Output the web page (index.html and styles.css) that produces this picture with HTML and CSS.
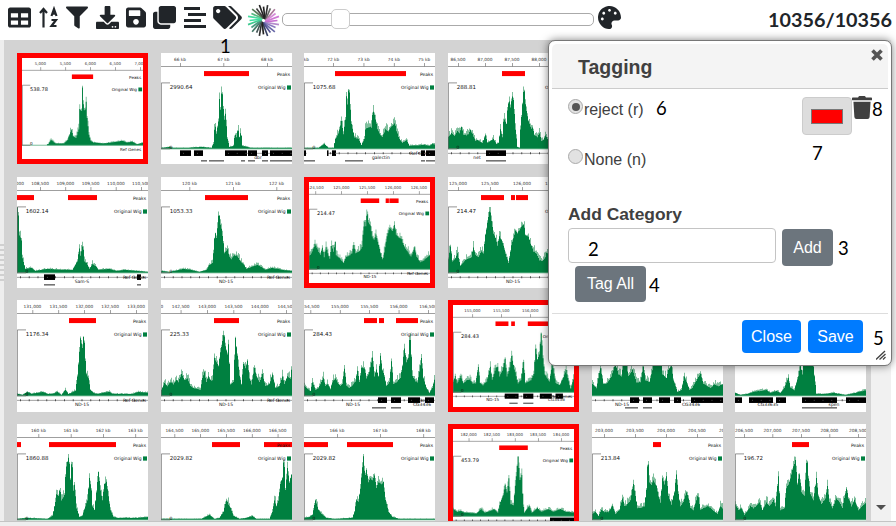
FILE: index.html
```html
<!DOCTYPE html>
<html lang="en">
<head>
<meta charset="utf-8">
<title>Tagging</title>
<link rel="stylesheet" href="styles.css">
</head>
<body>
<header class="toolbar">
  <svg class="icon w23" viewBox="0 0 512 512"><path d="M464 32H48C21.49 32 0 53.49 0 80v352c0 26.51 21.49 48 48 48h416c26.51 0 48-21.49 48-48V80c0-26.51-21.49-48-48-48zM224 416H64v-96h160v96zm0-160H64v-96h160v96zm224 160H288v-96h160v96zm0-160H288v-96h160v96z"/></svg>
  <svg class="icon w20" viewBox="0 0 20 22"><path d="M4.500 21V3M1 6.500l3.500-4 3.500 4M12.500 9.500l2.500-7 2.500 7M13.300 7.200h3.400M12.500 13.500h4.500l-4.500 6h5" fill="none" stroke="#212529" stroke-width="2.200"/></svg>
  <svg class="icon w22" viewBox="0 0 512 512"><path d="M487.976 0H24.028C2.710 0-8.047 25.866 7.058 40.971L192 225.941V432c0 7.831 3.821 15.170 10.237 19.662l80 55.980C298.020 518.690 320 507.493 320 487.980V225.941l184.947-184.970C520.021 25.896 509.338 0 487.976 0z"/></svg>
  <svg class="icon w23" viewBox="0 0 512 512"><path d="M216 0h80c13.300 0 24 10.700 24 24v168h87.700c17.800 0 26.700 21.500 14.100 34.100L269.700 378.300c-7.500 7.500-19.800 7.500-27.300 0L90.100 226.100c-12.600-12.600-3.700-34.100 14.100-34.100H192V24c0-13.300 10.700-24 24-24zm296 376v112c0 13.300-10.700 24-24 24H24c-13.300 0-24-10.700-24-24V376c0-13.300 10.700-24 24-24h146.700l49 49c20.100 20.100 52.500 20.100 72.600 0l49-49H488c13.300 0 24 10.700 24 24zm-124 88c0-11-9-20-20-20s-20 9-20 20 9 20 20 20 20-9 20-20zm64 0c0-11-9-20-20-20s-20 9-20 20 9 20 20 20 20-9 20-20z"/></svg>
  <svg class="icon w20" viewBox="0 0 448 512"><path d="M433.941 129.941l-83.882-83.882A48 48 0 0 0 316.118 32H48C21.490 32 0 53.490 0 80v352c0 26.510 21.490 48 48 48h352c26.510 0 48-21.490 48-48V163.882a48 48 0 0 0-14.059-33.941zM224 416c-35.346 0-64-28.654-64-64 0-35.346 28.654-64 64-64s64 28.654 64 64c0 35.346-28.654 64-64 64zm96-304.520V212c0 6.627-5.373 12-12 12H76c-6.627 0-12-5.373-12-12V108c0-6.627 5.373-12 12-12h228.520c3.183 0 6.235 1.264 8.485 3.515l3.480 3.480A11.996 11.996 0 0 1 320 111.480z"/></svg>
  <svg class="icon w23" viewBox="0 0 512 512"><path d="M464 0c26.510 0 48 21.490 48 48v288c0 26.510-21.490 48-48 48H176c-26.510 0-48-21.490-48-48V48c0-26.510 21.490-48 48-48h288M176 416c-44.112 0-80-35.888-80-80V128H48c-26.510 0-48 21.490-48 48v288c0 26.510 21.490 48 48 48h288c26.510 0 48-21.490 48-48v-48H176z"/></svg>
  <svg class="icon w23" viewBox="0 0 23 23"><path d="M1 1h16v3H1zM5 7h18v3H5zM1 13h17v3H1zM1 19h22v3H1z"/></svg>
  <svg class="icon w29" viewBox="0 0 640 512"><path d="M497.941 225.941L286.059 14.059A48 48 0 0 0 252.118 0H48C21.490 0 0 21.490 0 48v204.118a48 48 0 0 0 14.059 33.941l211.882 211.882c18.744 18.745 49.136 18.746 67.882 0l204.118-204.118c18.745-18.745 18.745-49.137 0-67.882zM112 160c-26.510 0-48-21.490-48-48s21.490-48 48-48 48 21.490 48 48-21.490 48-48 48zm513.941 133.823L421.823 497.941c-18.745 18.745-49.137 18.745-67.882 0l-.36-.36L527.640 323.522c16.999-16.999 26.360-39.600 26.360-63.640s-9.362-46.641-26.360-63.640L331.397 0h48.721a48 48 0 0 1 33.941 14.059l211.882 211.882c18.745 18.745 18.745 49.137 0 67.882z"/></svg>
  <svg class="burst" id="burst" viewBox="-16 -16 32 32"></svg>
  <div class="slider"><span class="handle"></span></div>
  <svg class="icon w23 palette" viewBox="0 0 512 512"><path d="M204.300 5C104.900 24.400 24.800 104.300 5.200 203.400c-37 187 131.700 326.400 258.800 306.700 41.200-6.400 61.400-54.600 42.500-91.700-23.100-45.400 9.900-98.400 60.900-98.400h79.700c35.800 0 64.800-29.600 64.900-65.300C511.500 97.100 368.100-26.900 204.300 5zM96 320c-17.700 0-32-14.300-32-32s14.300-32 32-32 32 14.300 32 32-14.300 32-32 32zm32-128c-17.700 0-32-14.300-32-32s14.300-32 32-32 32 14.300 32 32-14.300 32-32 32zm128-64c-17.700 0-32-14.300-32-32s14.300-32 32-32 32 14.300 32 32-14.300 32-32 32zm128 64c-17.700 0-32-14.300-32-32s14.300-32 32-32 32 14.300 32 32-14.300 32-32 32z"/></svg>
  <div class="count">10356/10356</div>
</header>
<main class="content">
  <div class="splitter"><i></i><i></i><i></i><i></i><i></i><i></i><i></i><i></i></div>
  <section class="gallery" id="gallery"></section>
  <div class="scrollbar"><span class="down"></span></div>
</main>
<footer class="bottom"></footer>

<div class="dialog">
  <div class="dialog-head"><h1>Tagging</h1>
    <svg class="close-x" viewBox="0 0 12 12"><path d="M1.500 1.500l9 9M10.500 1.500l-9 9" stroke="#555" stroke-width="3.600"/></svg>
  </div>
  <div class="dialog-body">
    <div class="choice first">
      <span class="radio on"></span><span class="choice-name">reject (r)</span>
      <span class="swatch"><span></span></span>
      <svg class="trash" viewBox="0 0 448 512"><path d="M432 32H312l-9.400-18.700A24 24 0 0 0 281.100 0H166.800a23.720 23.720 0 0 0-21.400 13.300L136 32H16A16 16 0 0 0 0 48v32a16 16 0 0 0 16 16h416a16 16 0 0 0 16-16V48a16 16 0 0 0-16-16zM53.200 467a48 48 0 0 0 47.900 45h245.800a48 48 0 0 0 47.900-45L416 128H32z"/></svg>
    </div>
    <div class="choice"><span class="radio"></span><span class="choice-name">None (n)</span></div>
    <h2>Add Category</h2>
    <div class="add-row"><div class="field"></div><div class="btn grey add">Add</div></div>
    <div class="btn grey tagall">Tag All</div>
  </div>
  <div class="dialog-foot"><div class="btn blue close">Close</div><div class="btn blue save">Save</div></div>
  <svg class="grip" viewBox="0 0 10 10"><path d="M0 9.500L9 1M3.500 9.500L9.500 4M7 9.500L9.500 7" stroke="#444" stroke-width="1.300"/></svg>
</div>

<span class="note n1">1</span><span class="note n2">2</span><span class="note n3">3</span><span class="note n4">4</span>
<span class="note n5">5</span><span class="note n6">6</span><span class="note n7">7</span><span class="note n8">8</span>
<script src="tracks.js"></script>
</body>
</html>
```
FILE: styles.css
```css
* { box-sizing: border-box; }
body { margin: 0; width: 896px; height: 526px; overflow: hidden; position: relative; background: #fff; font-family: "Liberation Sans", Arial, sans-serif; display: flex; flex-direction: column; }

.toolbar { height: 40px; flex: none; display: flex; padding: 6px 4px 0 8px; align-items: flex-start; }
.icon { height: 23px; flex: none; fill: #212529; margin-right: 8px; }
.w20 { width: 20px; } .w22 { width: 22px; } .w23 { width: 23px; } .w29 { width: 29px; }
.toolbar .w20 { margin-right: 7px; }
.toolbar .w23 { margin-right: 7px; }
.toolbar .w23:first-child { margin-right: 8px; }
.toolbar .w29 { margin-right: 5px; }
.burst { width: 33px; height: 33px; margin: -2px 2px 0 0; flex: none; }
.slider { width: 312px; height: 13px; margin-top: 7px; border: 1px solid #aaa; border-radius: 5px; flex: none; position: relative; }
.handle { position: absolute; left: 48px; top: -5px; width: 19px; height: 20px; border: 1px solid #ccc; border-radius: 5px; background: #fff; }
.palette { margin-left: 4px; }
.count { margin-left: auto; font: bold 19.800px/26px Lato, sans-serif; color: #212529; }

.content { flex: 1; min-height: 0; display: flex; }
.splitter { width: 4px; background: #eee; display: flex; flex-direction: column; gap: 3px; padding-top: 204px; }
.splitter i { height: 2px; background: #d0d0d0; flex: none; }
.gallery { width: 867px; height: 481px; overflow: hidden; background: #d3d3d3; padding: 13px; display: grid; grid-template-columns: repeat(6, 131px); grid-auto-rows: 111.400px; column-gap: 12.700px; row-gap: 12.200px; }
.tile { width: 131px; height: 111.400px; background: #fff; overflow: hidden; }
.tile.rejected { border: 5px solid #f00; }
.tile svg { display: block; width: 100%; height: 100%; }
.tile text { font-family: "DejaVu Sans", sans-serif; font-size: 4.500px; fill: #111; }
.tile .value { font-size: 5.500px; fill: #111; }
.tile .tick { font-size: 4.300px; fill: #333; }
.scrollbar { width: 20px; background: #f1f1f1; display: flex; align-items: flex-end; justify-content: center; padding-bottom: 11px; }
.down { border: 5px solid transparent; border-top-color: #505050; border-bottom: 0; }
.bottom { height: 5px; flex: none; background: #eee; border-top: 1px solid #c4c4c4; }

.dialog { position: absolute; left: 548px; top: 40px; width: 344px; height: 326px; background: #fff; border: 1px solid #777; border-radius: 7px; padding: 3px; box-shadow: 0 0 8px rgba(0,0,0,.5); color: #404040; display: flex; flex-direction: column; }
.dialog-head { height: 45px; flex: none; background: #f4f4f4; border-bottom: 1px solid #ccc; border-radius: 5px 5px 0 0; display: flex; justify-content: space-between; padding: 0 5px 0 26px; }
.dialog-head h1 { margin: 11px 0 0; font-size: 19.500px; line-height: 24px; }
.close-x { width: 12px; height: 12px; margin-top: 5px; }
.dialog-body { flex: 1; padding-left: 16px; }
.choice { display: flex; height: 50px; padding-top: 10px; }
.radio { width: 15px; height: 15px; border: 1px solid #aaa; border-radius: 50%; background: #e2e2e2; display: flex; align-items: center; justify-content: center; flex: none; }
.radio.on::after { content: ""; width: 8px; height: 8px; border-radius: 50%; background: #555; }
.choice-name { margin: 2px 0 0 1px; font-size: 16px; line-height: 18px; width: 218px; }
.swatch { width: 50px; height: 38px; margin-top: -2px; background: #ddd; border: 1px solid #ccc; border-radius: 4px; display: flex; align-items: center; justify-content: center; }
.swatch span { width: 32px; height: 15px; background: #f00; border: 1px solid #777; }
.trash { width: 20px; height: 23px; margin-top: -3px; fill: #404040; }
.dialog-body h2 { margin: 15px 0 0; font-size: 17.400px; line-height: 20px; }
.add-row { display: flex; align-items: flex-start; gap: 6px; margin-top: 4px; height: 38px; }
.field { width: 208px; height: 35px; border: 1px solid #c4c4c4; border-radius: 4px; }
.btn { color: #fff; font-size: 16px; border-radius: 4px; display: flex; align-items: center; justify-content: center; }
.grey { background: #6c757d; }
.blue { background: #007bff; }
.add { width: 51px; height: 37px; margin-top: 1px; }
.tagall { width: 71px; height: 36px; margin-left: 7px; }
.dialog-foot { height: 49px; flex: none; border-top: 1px solid #ddd; padding: 6px 25px 0 0; display: flex; justify-content: flex-end; gap: 7px; }
.close { width: 59px; height: 33px; } .save { width: 55px; height: 33px; }
.grip { position: absolute; right: 5px; bottom: 5px; width: 10px; height: 10px; }

.note { position: absolute; font: 18.500px/20px Lato, sans-serif; color: #000; }
.n1 { left: 220px; top: 36px; } .n2 { left: 588px; top: 239px; } .n3 { left: 838px; top: 238px; } .n4 { left: 649px; top: 275px; }
.n5 { left: 873px; top: 328px; } .n6 { left: 656px; top: 98px; } .n7 { left: 812px; top: 143px; } .n8 { left: 872px; top: 99px; }
```
FILE: tracks.js
```js
// Each tile: v value, t tick start/step positions, l tick labels, p peaks,
// w signal outline as x,height pairs, g gene boxes, n gene names, u lower marks.
const LINE = [0, 131];
const tiles = [
 {r:1,v:'538.78',t:[20,27],l:['5,000','5,500','6,000','6,500','7,000'],p:[[54,23]],w:'27,0 31,6 36,2 45,2 49,6 53,17 55,10 58,8 61,18 62,40 64,38 65,64 66,45 67.5,35 69,48 70,30 72,12 74,5 77,3 88,2 103,4 108,5 113,3 119,4 124,1 131,3',ref:1},
 {v:'2990.64',t:[19,43.5],l:['66 kb','67 kb','68 kb'],p:[[43,45]],w:'0,1 8,2 12,1 25,1 40,2 50,1 52,5 53.5,27 55,15 57,28 58,50 59,40 60.5,64 61.5,45 63,30 64,35 66,10 68,2 72,3 73.5,15 75,12 76.5,21 78,12 79.5,18 81,3 90,1 131,1',line:[64,131],g:[[19,11],[33,9],[64,22],[87,9],[101,6],[109,22]],n:[['dbr',97]],u:[[40,6],[48,15],[80,4],[87,7],[101,6],[109,22]]},
 {v:'1075.68',t:[-1,30.3],l:['71 kb','72 kb','73 kb','74 kb','75 kb'],p:[[31,71]],w:'0,1 14,1 20,5 24,1 29,1 31,10 34,16 37,28 39,15 41,30 42,53 43,45 44.5,65 46,40 47,25 50,12 54,10 57,4 60,10 61,20 64,22 67,22 68.5,40 71,30 73,20 76,14 78,12 81,20 84,18 86,22 89,24 90.5,26 92,18 95,10 98,6 102,9 105,3 120,4 125,3 128,5 131,4',line:[23,131],ref:1,g:[[0,2],[23,1.5],[28,4],[117,4],[122,9]],n:[['galectin',77]],u:[[0,11],[41,18],[117,4],[122,9]]},
 {v:'288.81',t:[10,27],l:['86,500','87,000','87,500','88,000','88,500'],p:[[54,23]],w:'0,12 3,16 6,13 9,18 11,16 13,22 15,15 18,14 20,15 22,19 24,15 27,8 29,9 32,7 34,6 37,14 39,6 42,8 45,10 48,5 50,6 52,20 54,12 55,28 56,30 58,25 59.5,45 61,48 62,42 64.5,56 66,35 67,20 69,2 71,1 72,20 73,32 75.5,64 77,45 78,38 80,28 83,20 84,22 86,14 89,12 91,16 93,8 95,9 97,14 99,10 101,15 131,8',line:LINE,g:[[38,20]],n:[['net',29]],u:[[38,20]]},
 {}, {},
 {v:'1602.14',t:[-2,25.2],l:['108,000','108,500','109,000','109,500','110,000','110,500'],p:[[0,17],[51,29]],w:'0,65 1,58 2,38 4,33 5,15 8,4 14,5 18,2 30,4 45,3 55,3 58,8 60,12 62,25 63,18 65.5,29 67,12 69,10 72,4 75,9 78,7 81,3 92,4 99,2 107,3 120,2 131,1',line:LINE,ref:1,g:[[27,11],[120,4]],n:[['Sam-S',65]],u:[[27,11],[120,4]]},
 {v:'1053.33',t:[28.5,43.5],l:['120 kb','121 kb','122 kb'],p:[[44,43]],w:'0,2 8,1 22,4 30,3 38,1 45,3 48,8 51,10 52,20 53.5,42 55,35 56.5,50 57.5,64 58.5,50 60,45 62,30 63,20 66,24 68,16 70,14 73,18 76,17 79,12 82,9 85,4 90,6 96,8 100,6 104,3 110,5 116,4 121,3 131,2',line:LINE,ref:1,n:[['ND-15',65]]},
 {r:1,v:'214.47',t:[7,28],l:['124,500','125,000','125,500','126,000','126,500'],p:[[56,20],[83,3.5],[87,10]],w:'0,15 3,20 6,28 9,22 12,16 14,24 16,14 18,25 20,18 22,12 24,26 26,20 28,30 29,16 33,12 37,7 40,14 44,16 46,18 48,27 50,18 54,20 57,25 58.5,45 60,52 61,48 62.5,65 64,52 66,48 68,36 70,33 72,38 75,27 78,14 79.5,10 82,25 84,37 87,46 90,42 92,49 94,38 97,35 100,33 103,24 107,19 110,14 114,24 116,14 120,8 124,10 128,14 131,16',line:LINE,ref:1,n:[['ND-15',66]]},
 {v:'214.47',t:[10,32],l:['125,000','125,500','126,000','126,500'],p:[[33,23],[63,4],[68,12]],w:'0,14 2,27 4,12 7,15 9,20 12,7 16,12 20,15 23,16 25,26 27,18 30,16 33,22 35,20 37,38 39,50 41.5,65 43,52 45,40 47,35 49,28 51,37 53,33 55,28 57,20 60,10 63,28 65,35 67,42 69,40 71,43 73,46 75.5,49 77,38 80,36 82,30 85,22 88,20 91,13 94,12 97,16 98.5,22 101,12 131,15',line:LINE,n:[['ND-15',65]]},
 {}, {},
 {v:'1176.34',t:[15.5,25.9],l:['131,000','131,500','132,000','132,500','133,000'],p:[[52,27]],w:'0,2 5,1 10,4 14,2 25,4 30,2 35,2 40,4 44,1 48,6 51,2 58,5 60,20 61.5,38 63,58 65,48 66.5,65 67.5,42 69,22 71,18 73,6 76,3 79,2 92,4 95,2 103,2 115,2 121,4 131,3',line:LINE,ref:1,n:[['ND-15',65]]},
 {v:'225.33',t:[-6.7,26.4],l:['142,000','142,500','143,000','143,500','144,000','144,500'],p:[[53,25]],w:'0,6 3,13 6,10 9,14 12,12 15,16 17,14 20,22 23,16 26,18 29,10 32,8 36,7 39,6 41,18 43,24 45,14 47,20 49,16 51,16 53,38 55,34 57,30 59,44 61,55 62.5,64 64,50 66,42 67,52 69,12 72,14 74,58 76,40 78,20 80,12 82,32 84,28 86,35 88,18 90,12 93,28 95,20 98,14 101,22 104,10 108,12 111,22 114,8 118,10 121,20 123,12 126,20 129,18 131,34',line:LINE,ref:1,n:[['ND-15',65]]},
 {v:'284.43',t:[6.5,29.4],l:['154,500','155,000','155,500','156,000','156,500'],p:[[60,13],[75,5],[92,22]],w:'0,10 3,7 6,5 8,14 11,6 14,8 19,18 21,10 23,12 26,7 28,14 31,18 34,12 36,10 38,12 40,28 42,10 45,8 49,12 51,15 53,26 55,14 57,28 60,28 62,18 65,24 68,39 70,20 72,27 74,20 76,40 78,26 80,20 82,10 85,14 87,35 89,12 92,14 96,18 98,30 100,48 102,34 104,38 105.5,65 107,40 108,20 111,15 113,14 115,25 117,38 119,18 122,8 125,3 128,8 131,20',line:LINE,ref:1,g:[[74,9],[87,10],[104,12],[121,9]],n:[['ND-15',49],['CG3436',118]],u:[[68,14],[87,10]]},
 {r:1,v:'284.43',t:[21,31.3],l:['155,000','155,500','156,000','156,500'],p:[[46,14],[63,4],[81,25]],w:'0,12 2,18 4,10 8,18 11,10 15,14 18,14 21,10 24,10 27,28 29,10 32,8 36,12 40,28 42,14 46,27 48,28 50,18 53,24 56,37 58,18 61,27 63,40 65,30 67,22 70,10 73,14 76,34 78,10 84,14 87,20 89,48 91,36 93,42 95,65 97,38 99,20 104,12 107,32 111,10 115,8 118,14 122,25 125,12 127,4 131,18',line:LINE,ref:1,g:[[56,15],[76,11],[94,13],[111,8]],n:[['ND-15',43],['CG3436',112]],u:[[61,9],[76,11]]},
 {w:'0,12 4,8 8,28 11,12 15,13 19,20 23,32 26,22 29,20 31,32 33,36 36,20 40,26 44,14 48,14 51,30 53,16 57,14 60,26 63,50 65,60 68,50 70,22 74,18 76,26 79,30 81,16 85,4 89,6 92,20 94,14 97,6 100,8 103,14 108,22 111,12 115,10 118,8 122,12 126,10 131,12',line:LINE,g:[[38,9],[51,9],[67,11],[82,7],[99,32]],n:[['ND-15',30],['CG3436',99]],u:[[33,13],[51,9]]},
 {w:'0,3 5,1 12,2 18,4 25,5 31,6 35,3 41,5 45,3 49,8 51,14 53,18 55,8 59,6 63,20 65,30 67,22 69,50 72,65 74,60 77,40 79,20 81,2 90,2 98,3 110,1 120,3 131,6',line:[95,131],g:[[0,7],[14,24],[41,10],[67,35],[111,20]],n:[['CG33635',33],['spen',99]],u:[[67,35]]},
 {v:'1860.88',t:[21.5,32.3],l:['160 kb','161 kb','162 kb','163 kb'],p:[[0,4],[32,67]],w:'0,1 10,2 30,1 35,4 38,18 39,26 41,24 42.5,32 44,20 47,25 48.5,52 50,58 51.5,64 53,40 54.5,64 56,30 57,35 59,12 62,3 65,4 68,14 70,20 72,42 74,30 75,14 77,10 79,28 81,48 83,30 85,20 87,36 89,38 91,24 93,10 96,3 100,2 120,2 131,3',g:[[0,15],[22,97]]},
 {v:'2029.82',t:[13.5,25.8],l:['164,500','165,000','165,500','166,000','166,500'],p:[[51,28],[103,28]],w:'0,1 40,1 48,5 53,1 58,2 62,8 65,20 67,16 69,12 72,4 78,1 85,2 91,4 95,1 108,1 111,8 113,20 115,14 117,20 119,36 121,42 122.5,65 124,30 126,52 128,38 130,45 131,44'},
 {v:'2029.82',t:[33,43.2],l:['166 kb','167 kb','168 kb'],p:[[0,24],[43,46]],w:'0,2 5,3 8,5 11,20 14,10 17,6 22,2 30,1 48,2 50,8 52,20 54,18 56,32 59,64 60.5,42 62,50 64,38 66,42 68,40 70,45 72,32 74,38 77,36 79,38 81,20 84,8 88,3 95,1 131,1'},
 {r:1,v:'453.79',t:[17,25],l:['182,000','182,500','183,000','183,500','184,000'],p:[[50,31]],w:'0,8 4,5 8,6 12,4 25,3 30,8 34,4 40,6 44,8 48,4 51,16 54,24 56,35 58,26 60,42 62,14 65,12 67,34 70,66 72,40 74,46 75.5,14 77,4 82,12 85,4 91,9 95,5 103,8 108,5 116,8 122,5 131,4',line:LINE,g:[[105,26]]},
 {v:'213.84',t:[12,31],l:['203,000','203,500','204,000','204,500','205,000'],p:[[61,8]],w:'0,6 3,8 6,4 9,10 12,8 16,8 20,14 23,6 27,10 30,22 32,14 35,16 38,20 41,36 43,24 45,12 48,12 52,14 54,30 55.5,65 57,38 59,35 61,40 64,34 66,24 68,18 70,42 72,36 74,44 76,24 79,16 82,28 84,46 86,26 88,14 91,18 94,28 96,22 98,12 101,10 104,20 105.5,26 108,10 111,12 116,14 120,10 125,6 128,14 131,11',g:[[60,7],[73,49]]},
 {v:'196.72',t:[9,28.5],l:['206,500','207,000','207,500','208,000','208,500'],p:[[57,17]],w:'0,16 3,10 6,12 9,5 12,9 15,14 18,12 21,14 24,18 27,10 31,18 34,14 38,20 40,14 43,44 45,10 49,12 51,32 54,38 57,50 60,60 62,36 64,46 66,28 69,24 71.5,65 73,42 75,26 78,20 81,42 83,24 86,16 90,22 92,34 94,18 97,12 101,22 104,18 107,12 111,32 113,22 116,14 119,20 123,10 127,14 131,18',g:[[48,26],[79,51]]}
];

const BASE = 95.5;

function outline(points, spread, seed) {
  let d = '', i = 0, s = seed;
  for (let x = points[0][0]; x < 131; x += 1) {
    while (i < points.length - 2 && points[i + 1][0] <= x) i++;
    const [x0, h0] = points[i], [x1, h1] = points[i + 1];
    let h = h0 + (h1 - h0) * (x - x0) / (x1 - x0);
    s = (s * 1103515245 + 12345) % 2147483648;
    const n = s / 2147483648;
    h = Math.min(65.5, Math.max(1, h + spread * n * Math.min(5, h * .3)));
    d += `${d ? 'L' : 'M' + x + ' ' + BASE + 'L'}${x} ${(BASE - h).toFixed(1)}H${x + 1}`;
  }
  return d + `V${BASE}Z`;
}

function draw(t, index) {
  let s = '<rect x="0" y="13" width="131" height=".8" fill="#888"/>';
  (t.l || []).forEach((label, k) => {
    const x = t.t[0] + k * t.t[1];
    s += `<rect x="${x}" y="10" width=".7" height="3.5" fill="#777"/><text class="tick" text-anchor="middle" x="${x}" y="7.800">${label}</text>`;
  });
  (t.p || []).forEach(([x, w]) => s += `<rect x="${x}" y="18" width="${w}" height="5" fill="#f00"/>`);
  if (t.w) {
    const pts = t.w.split(' ').map(p => p.split(',').map(Number));
    s += `<path d="${outline(pts, 1.3, index + 7)}" fill="#7fbf9d"/><path d="${outline(pts, -.2, index + 31)}" fill="#008040"/>`;
    s += `<path d="M0 ${BASE}H131" stroke="#4da878" stroke-width=".8"/>`;
  }
  if (t.v) {
    s += `<path d="M.4 ${BASE}V29.800H9M0 ${BASE}H9" fill="none" stroke="#666" stroke-width=".7"/>`;
    s += `<text class="value" x="8.800" y="35.600">${t.v}</text>`;
    s += '<text text-anchor="end" x="129" y="22.500">Peaks</text><text text-anchor="end" x="124.500" y="36.300">Original Wig</text><rect x="126" y="32.300" width="4" height="4.200" fill="#008040"/>';
    s += `<text x="8.600" y="95.500">0</text>`;
  }
  if (t.line) {
    const [a, b] = t.line;
    s += `<path d="M${a} 100H${b}" stroke="#777" stroke-width=".7"/><path d="M${a + 3} 100H${b}" stroke="#333" stroke-width="2" stroke-dasharray=".8 8"/>`;
  }
  if (t.ref) s += '<text text-anchor="end" x="129" y="101.500">Ref Genes</text>';
  (t.g || []).forEach(([x, w]) => s += `<rect x="${x}" y="97" width="${w}" height="5.600" fill="#000"/><path d="M${x + 3} 100H${x + w}" stroke="#888" stroke-width=".7" stroke-dasharray=".8 8"/>`);
  (t.n || []).forEach(([name, x]) => s += `<text text-anchor="middle" x="${x}" y="105.500">${name}</text>`);
  (t.u || []).forEach(([x, w]) => s += `<rect x="${x}" y="107" width="${w}" height="1" fill="#222"/>`);
  return `<div class="tile${t.r ? ' rejected' : ''}"><svg viewBox="0 0 131 111" preserveAspectRatio="none">${s}</svg></div>`;
}
document.getElementById('gallery').innerHTML = tiles.map(draw).join('');

// Radial cluster icon: spokes coloured clockwise from the top, slightly swirled
const spokes = ['#222','#333','#666','#a79','#d58ad8','#cf78d4','#c66fd0','#b58acb','#8b7bc0','#6a6aa8','#505090','#384060','#222','#333','#455','#476','#4a9a80','#3fc98f','#3fe0a0','#48dca0','#58b880','#575','#444','#222'];
document.getElementById('burst').innerHTML = spokes.map((colour, k) => {
  const a = k * Math.PI / 12, r = 13.500 + (k % 2) * 2, b = a + .8;
  return `<path d="M${(2 * Math.sin(b)).toFixed(1)} ${(-2 * Math.cos(b)).toFixed(1)}L${(r * Math.sin(a)).toFixed(1)} ${(-r * Math.cos(a)).toFixed(1)}" stroke="${colour}" stroke-width="1.600"/>`;
}).join('');
```
